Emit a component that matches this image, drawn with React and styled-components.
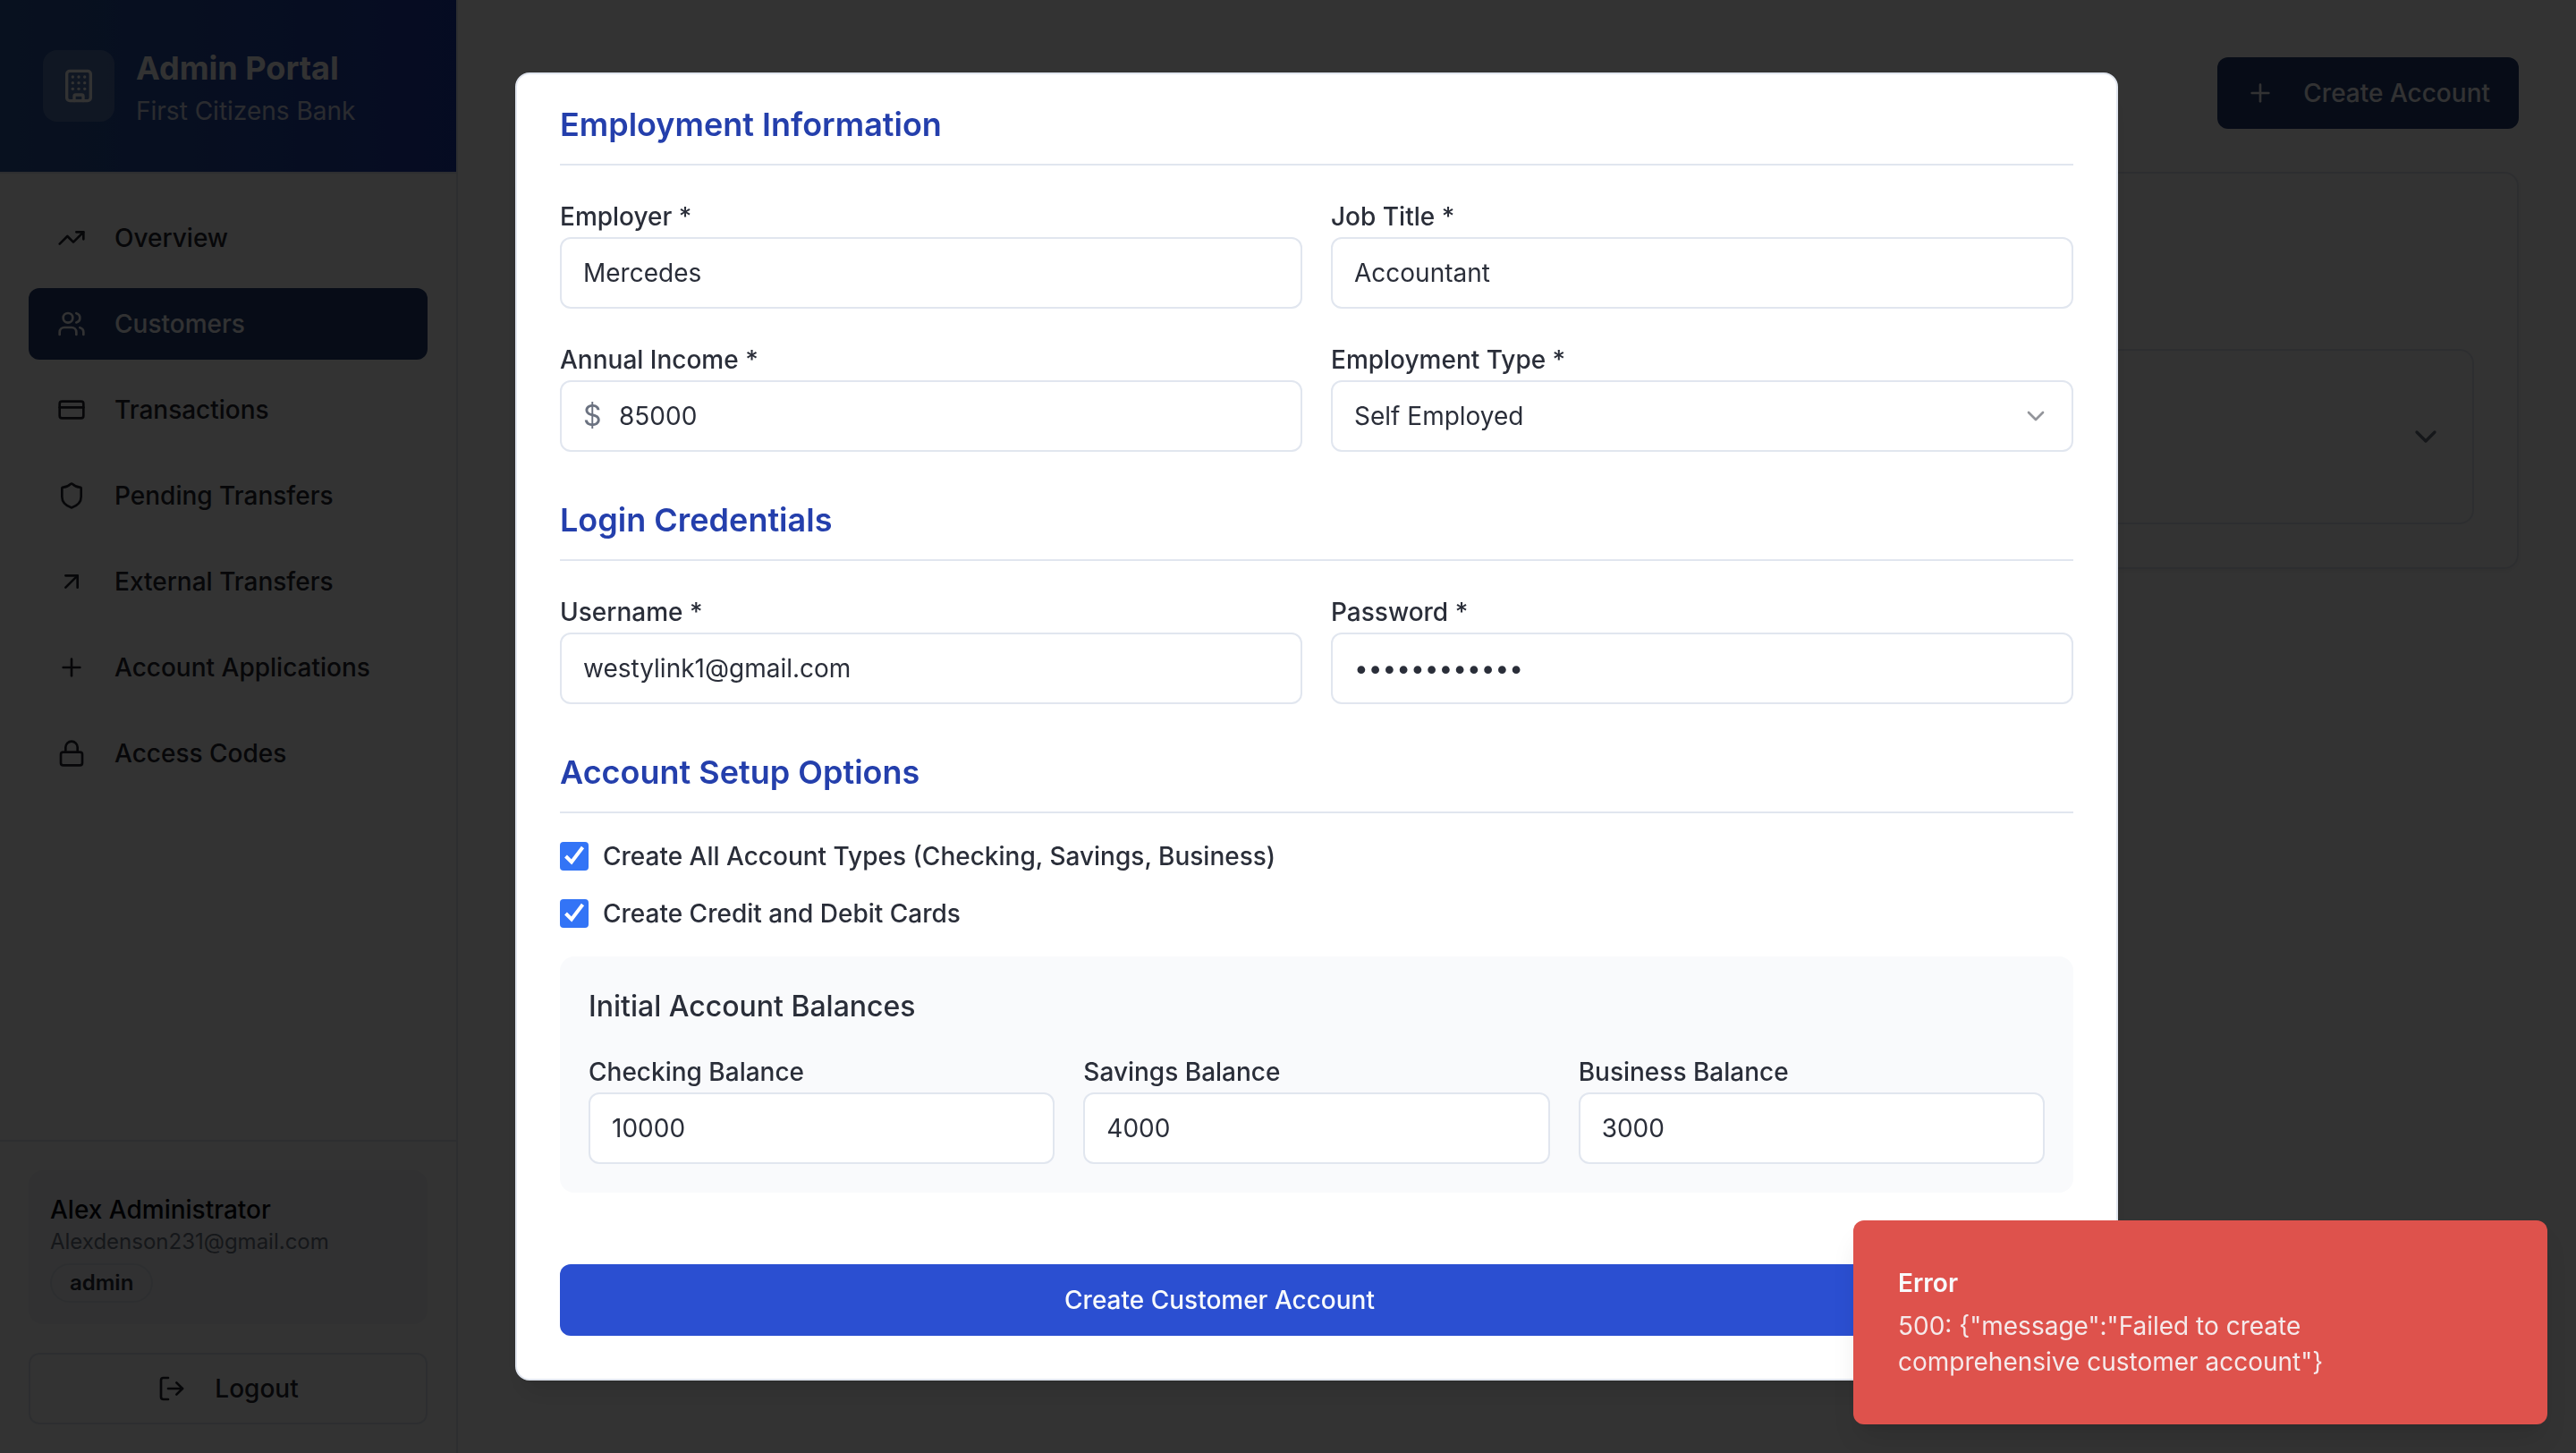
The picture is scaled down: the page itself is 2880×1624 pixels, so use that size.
import React from 'react';
import styled, { createGlobalStyle, css } from 'styled-components';
import {
  TrendingUp,
  Users,
  CreditCard,
  Shield,
  ArrowUpRight,
  Plus,
  Lock,
  LogOut,
  Building,
  ChevronDown,
} from 'lucide-react';

const color = {
  foreground: '#2a2e39',
  navText: '#23272f',
  title: '#050911',
  muted: '#6b7280',
  border: '#e1e6ef',
  primary: '#253f72',
  action: '#2b4fd1',
  heading: '#243fac',
  surface: '#f9fafc',
  danger: '#de524c',
};

const GlobalStyle = createGlobalStyle`
  *, *::before, *::after { box-sizing: border-box; }
  body {
    margin: 0;
    background: #fdfdfd;
    color: ${color.foreground};
    font-family: Inter, "Liberation Sans", sans-serif;
    font-size: 28px;
    line-height: 40px;
    -webkit-font-smoothing: antialiased;
  }
  h1, h2, h3, p, ul { margin: 0; padding: 0; }
  button, input, select { font: inherit; color: inherit; }
`;

const Page = styled.div`
  display: flex;
  min-height: 100vh;
`;

const Sidebar = styled.aside`
  display: flex;
  flex-direction: column;
  flex: none;
  width: 512px;
  border-right: 2px solid ${color.border};
`;

const Brand = styled.header`
  display: flex;
  align-items: center;
  gap: 24px;
  padding: 48px;
  border-bottom: 2px solid ${color.border};
  background: linear-gradient(90deg, #2a5599, #1d3bac) padding-box;
  color: #fbfbfb;
`;

const BrandMark = styled.span`
  display: grid;
  place-items: center;
  width: 80px;
  height: 80px;
  border-radius: 16px;
  background: rgba(255, 255, 255, 0.2);
`;

const BrandTitle = styled.h1`
  font-size: 36px;
  font-weight: 700;
  line-height: 56px;
`;

const BrandSubtitle = styled.p`
  opacity: 0.8;
`;

const Nav = styled.nav`
  flex: 1;
  padding: 32px;
`;

const NavList = styled.ul`
  display: grid;
  gap: 16px;
  list-style: none;
`;

const buttonBase = css`
  display: inline-flex;
  align-items: center;
  gap: 32px;
  height: 80px;
  padding: 0 32px;
  border: 0;
  border-radius: 12px;
  font-weight: 500;
  white-space: nowrap;
  cursor: pointer;
`;

const NavButton = styled.button`
  ${buttonBase}
  width: 100%;
  background: ${(p) => (p.$active ? color.primary : 'transparent')};
  color: ${(p) => (p.$active ? '#f8fafc' : color.navText)};
`;

const SidebarFooter = styled.footer`
  display: grid;
  gap: 32px;
  padding: 32px;
  border-top: 2px solid ${color.border};
`;

const Profile = styled.section`
  padding: 24px;
  border-radius: 16px;
  background: #f3f5f8;
`;

const ProfileName = styled.p`
  color: ${color.title};
  font-weight: 500;
`;

const ProfileEmail = styled.p`
  color: ${color.muted};
  font-size: 24px;
  line-height: 32px;
`;

const Badge = styled.span`
  display: block;
  width: fit-content;
  margin-top: 8px;
  padding: 4px 20px;
  border: 2px solid ${color.border};
  border-radius: 22px;
  color: ${color.foreground};
  font-size: 24px;
  font-weight: 600;
  line-height: 32px;
`;

const OutlineButton = styled.button`
  ${buttonBase}
  justify-content: center;
  padding: 0 48px;
  border: 2px solid ${color.border};
  background: transparent;
  color: ${color.navText};
`;

const Main = styled.main`
  display: flex;
  flex: 1;
  flex-direction: column;
  gap: 48px;
  padding: 64px;
`;

const Toolbar = styled.div`
  display: flex;
  justify-content: flex-end;
`;

const CreateButton = styled.button`
  ${buttonBase}
  background: ${color.primary};
  color: #f8fafc;
`;

const Card = styled.section`
  padding: 196px 48px 48px;
  border: 2px solid ${color.border};
  border-radius: 16px;
  box-shadow: 0 2px 4px rgba(0, 0, 0, 0.05);
`;

const CustomerRow = styled.div`
  display: flex;
  align-items: center;
  justify-content: flex-end;
  padding: 76px 32px;
  border: 2px solid ${color.border};
  border-radius: 16px;
`;

const Overlay = styled.div`
  position: fixed;
  inset: 0;
  display: grid;
  place-items: center;
  padding-left: 64px;
  background: rgba(0, 0, 0, 0.8);
`;

const Dialog = styled.div`
  display: flex;
  flex-direction: column;
  justify-content: flex-end;
  width: 100%;
  max-width: 1792px;
  height: 90vh;
  padding: 0 48px 48px;
  overflow: hidden;
  border: 2px solid ${color.border};
  border-radius: 16px;
  background: #fff;
  box-shadow: 0 20px 30px -6px rgba(0, 0, 0, 0.1), 0 8px 12px -8px rgba(0, 0, 0, 0.1);
`;

const Form = styled.form`
  display: grid;
  gap: 48px;
`;

const Section = styled.section`
  display: grid;
  gap: 32px;
`;

const SectionTitle = styled.h2`
  padding-bottom: 16px;
  border-bottom: 2px solid ${color.border};
  color: ${color.heading};
  font-size: 36px;
  font-weight: 600;
  line-height: 56px;
`;

const Fields = styled.div`
  display: grid;
  grid-template-columns: repeat(${(p) => p.$columns}, minmax(0, 1fr));
  gap: 32px;
`;

const FieldBox = styled.div`
  font-size: 32px;
  line-height: 48px;
`;

const FieldLabel = styled.label`
  font-size: 28px;
  font-weight: 500;
  line-height: 28px;
`;

const Control = styled.span`
  display: flex;
  align-items: center;
  gap: 8px;
  height: 80px;
  padding: 0 24px;
  border: 2px solid ${color.border};
  border-radius: 12px;
  background: #fff;
  font-size: 28px;
  line-height: 40px;
`;

const controlText = css`
  flex: 1;
  width: 100%;
  min-width: 0;
  height: 40px;
  padding: 0;
  border: 0;
  outline: 0;
  background: transparent;
  line-height: 40px;
`;

const Input = styled.input`
  ${controlText}
`;

const Select = styled.select`
  ${controlText}
  appearance: none;
`;

const Prefix = styled.span`
  width: 32px;
  color: ${color.muted};
  font-size: 32px;
`;

const CheckRow = styled.label`
  display: flex;
  align-items: center;
  gap: 16px;
  font-weight: 500;
  line-height: 32px;
`;

const CheckBoxWrap = styled.span`
  display: grid;
  flex: none;

  > * {
    grid-area: 1 / 1;
  }
`;

const Checkbox = styled.input`
  appearance: none;
  width: 32px;
  height: 32px;
  margin: 0;
  border-radius: 4px;
  background: #3374f6;
`;

const Balances = styled.div`
  display: grid;
  gap: 24px;
  padding: 32px;
  border-radius: 16px;
  background: ${color.surface};
`;

const BalancesTitle = styled.h3`
  font-size: 32px;
  font-weight: 500;
  line-height: 48px;
`;

const Actions = styled.div`
  display: flex;
  gap: 24px;
  padding-top: 32px;
`;

const SubmitButton = styled.button`
  ${buttonBase}
  flex: 1;
  justify-content: center;
  background: ${color.action};
  color: #f8fafc;
`;

const Toast = styled.div`
  position: fixed;
  right: 32px;
  bottom: 32px;
  display: grid;
  gap: 8px;
  width: 776px;
  padding: 50px 66px 50px 50px;
  border-radius: 12px;
  background: ${color.danger};
  color: #f8fafc;
  box-shadow: 0 20px 30px -6px rgba(0, 0, 0, 0.1), 0 8px 12px -8px rgba(0, 0, 0, 0.1);
`;

const ToastTitle = styled.p`
  font-weight: 600;
`;

const ToastText = styled.p`
  opacity: 0.9;
`;

const navItems = [
  { label: 'Overview', icon: TrendingUp },
  { label: 'Customers', icon: Users, active: true },
  { label: 'Transactions', icon: CreditCard },
  { label: 'Pending Transfers', icon: Shield },
  { label: 'External Transfers', icon: ArrowUpRight },
  { label: 'Account Applications', icon: Plus },
  { label: 'Access Codes', icon: Lock },
];

function Field({ id, label, prefix, ...rest }) {
  return (
    <FieldBox>
      <FieldLabel htmlFor={id}>{label}</FieldLabel>
      <Control>
        {prefix && <Prefix>{prefix}</Prefix>}
        <Input id={id} {...rest} />
      </Control>
    </FieldBox>
  );
}

function CheckOption({ children }) {
  return (
    <CheckRow>
      <CheckBoxWrap>
        <Checkbox type="checkbox" defaultChecked />
        <svg width="32" height="32" viewBox="0 0 32 32" fill="none" stroke="#fff" strokeWidth="4" pointerEvents="none" aria-hidden="true">
          <path d="M6.5 16 13 22.5 25.5 6" />
        </svg>
      </CheckBoxWrap>
      {children}
    </CheckRow>
  );
}

export default function App() {
  return (
    <>
      <GlobalStyle />
      <Page>
        <Sidebar>
          <Brand>
            <BrandMark>
              <Building size={40} />
            </BrandMark>
            <div>
              <BrandTitle>Admin Portal</BrandTitle>
              <BrandSubtitle>First Citizens Bank</BrandSubtitle>
            </div>
          </Brand>
          <Nav>
            <NavList>
              {navItems.map(({ label, icon: Icon, active }) => (
                <li key={label}>
                  <NavButton type="button" $active={active}>
                    <Icon size={32} />
                    {label}
                  </NavButton>
                </li>
              ))}
            </NavList>
          </Nav>
          <SidebarFooter>
            <Profile>
              <ProfileName>Alex Administrator</ProfileName>
              <ProfileEmail>Alexdenson231@gmail.com</ProfileEmail>
              <Badge>admin</Badge>
            </Profile>
            <OutlineButton type="button">
              <LogOut size={32} />
              Logout
            </OutlineButton>
          </SidebarFooter>
        </Sidebar>
        <Main>
          <Toolbar>
            <CreateButton type="button">
              <Plus size={32} />
              Create Account
            </CreateButton>
          </Toolbar>
          <Card>
            <CustomerRow>
              <ChevronDown size={40} color={color.muted} />
            </CustomerRow>
          </Card>
        </Main>
      </Page>

      <Overlay>
        <Dialog role="dialog" aria-modal="true">
          <Form onSubmit={(e) => e.preventDefault()}>
            <Section>
              <SectionTitle>Employment Information</SectionTitle>
              <Fields $columns={2}>
                <Field id="employer" label="Employer *" defaultValue="Mercedes" />
                <Field id="jobTitle" label="Job Title *" defaultValue="Accountant" />
                <Field id="income" label="Annual Income *" prefix="$" defaultValue="85000" />
                <FieldBox>
                  <FieldLabel htmlFor="employmentType">Employment Type *</FieldLabel>
                  <Control>
                    <Select id="employmentType" defaultValue="self">
                      <option value="self">Self Employed</option>
                    </Select>
                    <ChevronDown size={32} opacity={0.5} />
                  </Control>
                </FieldBox>
              </Fields>
            </Section>
            <Section>
              <SectionTitle>Login Credentials</SectionTitle>
              <Fields $columns={2}>
                <Field id="username" label="Username *" defaultValue="westylink1@gmail.com" />
                <Field id="password" label="Password *" type="password" defaultValue="aaaaaaaaaaaa" />
              </Fields>
            </Section>
            <Section>
              <SectionTitle>Account Setup Options</SectionTitle>
              <CheckOption>Create All Account Types (Checking, Savings, Business)</CheckOption>
              <CheckOption>Create Credit and Debit Cards</CheckOption>
              <Balances>
                <BalancesTitle>Initial Account Balances</BalancesTitle>
                <Fields $columns={3}>
                  <Field id="checking" label="Checking Balance" defaultValue="10000" />
                  <Field id="savings" label="Savings Balance" defaultValue="4000" />
                  <Field id="business" label="Business Balance" defaultValue="3000" />
                </Fields>
              </Balances>
            </Section>
            <Actions>
              <SubmitButton type="submit">Create Customer Account</SubmitButton>
              <OutlineButton type="button">Cancel</OutlineButton>
            </Actions>
          </Form>
        </Dialog>
      </Overlay>

      <Toast role="alert">
        <ToastTitle>Error</ToastTitle>
        <ToastText>{'500: {"message":"Failed to create comprehensive customer account"}'}</ToastText>
      </Toast>
    </>
  );
}
